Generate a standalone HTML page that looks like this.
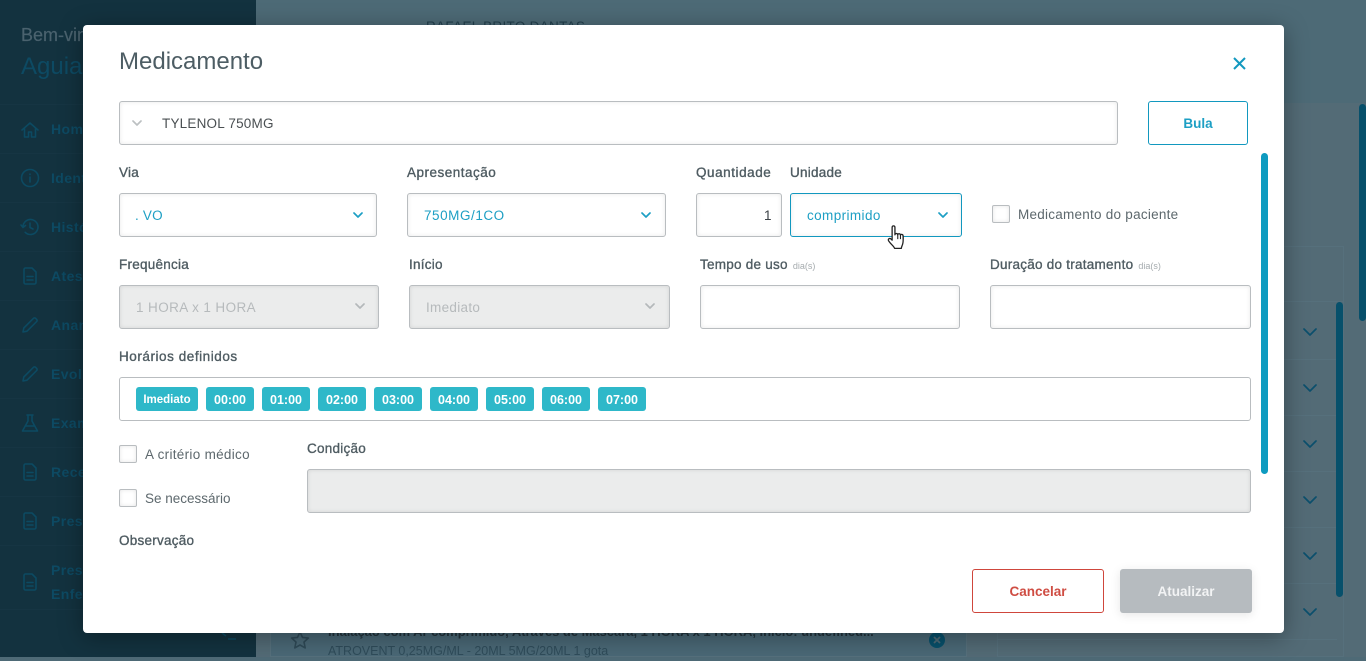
<!DOCTYPE html>
<html lang="pt-BR">
<head>
<meta charset="utf-8">
<title>Medicamento</title>
<style>
html,body{margin:0;padding:0;width:1366px;height:657px;overflow:hidden;background:#4e6a76;font-family:"Liberation Sans",sans-serif}
*{box-sizing:border-box}
.a{position:absolute}
.t{position:absolute;white-space:nowrap;line-height:20px;height:20px}
#side{left:0;top:0;width:256px;height:657px;background:#13323f}
.sep{position:absolute;left:0;width:256px;height:1px;background:#163543}
.st{position:absolute;left:51px;white-space:nowrap;color:#0d4a63;font-size:14px;font-weight:bold;line-height:20px;letter-spacing:.4px;margin-top:1px}
.si{position:absolute;left:20px;width:20px;height:20px;fill:none;stroke:#0c4a62;stroke-width:1.6;stroke-linecap:round;stroke-linejoin:round}
#modal{left:83px;top:25px;width:1201px;height:608px;background:#fff;border-radius:4px;box-shadow:0 4px 24px rgba(0,0,0,.35);position:absolute}
.lb{position:absolute;white-space:nowrap;font-size:13.5px;line-height:20px;color:#4f5c62;letter-spacing:.25px;-webkit-text-stroke:.35px #4f5c62;margin-top:1px}
.lb small{font-size:9px;color:#a5abae;-webkit-text-stroke:0;letter-spacing:0;margin-left:0}
.f{position:absolute;height:44px;background:#fff;border:1px solid #b9bdc0;border-radius:3px;box-shadow:inset 0 0 5px rgba(0,0,0,.09)}
.dis{background:#ebecec;box-shadow:inset 0 0 4px rgba(0,0,0,.1)}
.v{position:absolute;white-space:nowrap;font-size:13.5px;line-height:20px;letter-spacing:.2px;margin-top:1px}
.blue{color:#1d9fc4}
.chev{position:absolute;width:10px;height:6px;fill:none;stroke-width:1.7;stroke-linecap:round;stroke-linejoin:round}
.chip{position:absolute;top:387px;height:24px;width:48px;background:#2eb8c9;border-radius:3px;color:#fff;font-size:12.5px;font-weight:bold;text-align:center;line-height:24px;padding-top:1px}
.cb{position:absolute;width:18px;height:18px;background:#fff;border:1px solid #b9bdc0;border-radius:2px;box-shadow:inset 0 0 4px rgba(0,0,0,.1)}
.cl{position:absolute;white-space:nowrap;font-size:13.5px;line-height:20px;color:#5d686d;letter-spacing:.3px;margin-top:1px}
.line{position:absolute;background:#56707c;height:1px}
.dc{position:absolute;left:1303px;width:14px;height:9px;fill:none;stroke:#0b4f6c;stroke-width:1.7;stroke-linecap:round;stroke-linejoin:round}
</style>
</head>
<body>
<!-- page behind -->
<div class="a" style="left:256px;top:0;width:1110px;height:103px;background:#4d6a76"></div>
<div class="a" style="left:256px;top:103px;width:1110px;height:554px;background:#536b76"></div>
<div class="t" style="left:426px;top:17px;font-size:13.5px;color:#23404d;letter-spacing:.3px">RAFAEL BRITO DANTAS</div>
<div class="a" style="left:997px;top:246px;width:347px;height:411px;border:1px solid #56707c;background:#536b76"></div>
<div class="line" style="left:997px;top:301px;width:347px"></div>
<div class="line" style="left:997px;top:359px;width:340px"></div>
<div class="line" style="left:997px;top:415px;width:340px"></div>
<div class="line" style="left:997px;top:471px;width:340px"></div>
<div class="line" style="left:997px;top:527px;width:340px"></div>
<div class="line" style="left:997px;top:583px;width:340px"></div>
<div class="line" style="left:997px;top:639px;width:340px"></div>
<svg class="dc" style="top:328px" viewBox="0 0 14 9"><path d="M1 1l6 6 6-6"/></svg>
<svg class="dc" style="top:384px" viewBox="0 0 14 9"><path d="M1 1l6 6 6-6"/></svg>
<svg class="dc" style="top:440px" viewBox="0 0 14 9"><path d="M1 1l6 6 6-6"/></svg>
<svg class="dc" style="top:496px" viewBox="0 0 14 9"><path d="M1 1l6 6 6-6"/></svg>
<svg class="dc" style="top:552px" viewBox="0 0 14 9"><path d="M1 1l6 6 6-6"/></svg>
<svg class="dc" style="top:608px" viewBox="0 0 14 9"><path d="M1 1l6 6 6-6"/></svg>
<div class="a" style="left:1336px;top:302px;width:7px;height:295px;background:#07506b;border-radius:4px"></div>
<div class="a" style="left:1359px;top:104px;width:7px;height:217px;background:#07506b;border-radius:4px"></div>
<div class="a" style="left:270px;top:625px;width:697px;height:32px;background:#4a6876;border:1px solid #56707c"></div>
<svg class="a" style="left:290px;top:630px;width:20px;height:20px;fill:none;stroke:#2f4a57;stroke-width:1.6;stroke-linejoin:round" viewBox="0 0 20 20"><path d="M10 2l2.5 5.4 5.8.7-4.3 4 1.2 5.8L10 15l-5.2 2.9L6 12.100l-4.300-4 5.800-.7z"/></svg>
<div class="t" style="left:328px;top:622px;font-size:13px;font-weight:bold;color:#22333c;letter-spacing:-.03px">Inalação com Ar comprimido, Através de Máscara, 1 HORA x 1 HORA, Início: undefined...</div>
<div class="t" style="left:328px;top:641px;font-size:12.5px;color:#2f4c5a">ATROVENT 0,25MG/ML - 20ML 5MG/20ML 1 gota</div>
<svg class="a" style="left:929px;top:632px;width:16px;height:16px" viewBox="0 0 16 16"><circle cx="8" cy="8" r="8" fill="#07506b"/><path d="M5 5l6 6M11 5l-6 6" stroke="#4e6a76" stroke-width="1.8"/></svg>

<!-- sidebar -->
<div id="side" class="a">
  <div class="t" style="left:21px;top:25px;font-size:18px;color:#4a626e;-webkit-text-stroke:.2px #4a626e">Bem-vindo</div>
  <div class="t" style="left:21px;top:55px;font-size:24px;line-height:24px;height:26px;color:#0d4a63">Aguia</div>
  <div class="sep" style="top:104px"></div><div class="sep" style="top:153px"></div><div class="sep" style="top:202px"></div><div class="sep" style="top:251px"></div><div class="sep" style="top:300px"></div><div class="sep" style="top:349px"></div><div class="sep" style="top:398px"></div><div class="sep" style="top:447px"></div><div class="sep" style="top:496px"></div><div class="sep" style="top:545px"></div><div class="sep" style="top:609px"></div>
  <svg class="si" style="top:120px" viewBox="0 0 20 20"><path d="M2 10l8-7 8 7M4.500 8.500V17h4v-5h3v5h4V8.500"/></svg>
  <div class="st" style="top:118px">Home</div>
  <svg class="si" style="top:168px" viewBox="0 0 20 20"><circle cx="10" cy="10" r="8.500"/><path d="M10 9v5M10 6v.5"/></svg>
  <div class="st" style="top:167px">Identificação</div>
  <svg class="si" style="top:217px" viewBox="0 0 20 20"><path d="M3 10a7.500 7.500 0 1 1 2.200 5.300M1 8l2 2.500L5.500 8.500M10 6v4.500l3 1.500"/></svg>
  <div class="st" style="top:216px">Histórico</div>
  <svg class="si" style="top:266px" viewBox="0 0 20 20"><path d="M4 3.500a1.500 1.500 0 0 1 1.500-1.500H12l4 4v10.500a1.500 1.500 0 0 1-1.500 1.500h-9A1.500 1.500 0 0 1 4 16.500zM7 10.500h6M7 14h6"/></svg>
  <div class="st" style="top:265px">Atestado</div>
  <svg class="si" style="top:315px" viewBox="0 0 20 20"><path d="M3 17l.8-4L13.500 3.300a1.500 1.500 0 0 1 2.100 0l1.100 1.100a1.500 1.500 0 0 1 0 2.100L7 16.200z"/></svg>
  <div class="st" style="top:314px">Anamnese</div>
  <svg class="si" style="top:364px" viewBox="0 0 20 20"><path d="M3 17l.8-4L13.500 3.300a1.500 1.500 0 0 1 2.100 0l1.100 1.100a1.500 1.500 0 0 1 0 2.100L7 16.200z"/></svg>
  <div class="st" style="top:363px">Evolução</div>
  <svg class="si" style="top:413px" viewBox="0 0 20 20"><path d="M7 2h6M8 2v6L2.500 18h15L12 8V2M6 13h8"/></svg>
  <div class="st" style="top:412px">Exames</div>
  <svg class="si" style="top:462px" viewBox="0 0 20 20"><path d="M4 3.500a1.500 1.500 0 0 1 1.500-1.500H12l4 4v10.500a1.500 1.500 0 0 1-1.500 1.500h-9A1.500 1.500 0 0 1 4 16.500zM7 10.500h6M7 14h6"/></svg>
  <div class="st" style="top:461px">Receita</div>
  <svg class="si" style="top:511px" viewBox="0 0 20 20"><path d="M4 3.500a1.500 1.500 0 0 1 1.500-1.500H12l4 4v10.500a1.500 1.500 0 0 1-1.500 1.500h-9A1.500 1.500 0 0 1 4 16.500zM7 10.500h6M7 14h6"/></svg>
  <div class="st" style="top:510px">Prescrição</div>
  <svg class="si" style="top:572px" viewBox="0 0 20 20"><path d="M4 3.500a1.500 1.500 0 0 1 1.500-1.500H12l4 4v10.500a1.500 1.500 0 0 1-1.500 1.500h-9A1.500 1.500 0 0 1 4 16.500zM7 10.500h6M7 14h6"/></svg>
  <div class="st" style="top:559px">Prescrição</div>
  <div class="st" style="top:583px">Enfermagem</div>
  <svg class="a" style="left:220px;top:633px;width:18px;height:8px;fill:none;stroke:#0c4a62;stroke-width:1.6" viewBox="0 0 18 8"><path d="M2 0l4 3M8 6h8"/></svg>
</div>

<!-- modal -->
<div id="modal"></div>
<div class="t" style="left:119px;top:47px;height:30px;line-height:30px;font-size:24px;color:#4d5d64">Medicamento</div>
<svg class="a" style="left:1232px;top:56px;width:15px;height:15px;fill:none;stroke:#1298bf;stroke-width:2" viewBox="0 0 15 15"><path d="M2 2l11 11M13 2L2 13"/></svg>

<div class="f" style="left:119px;top:101px;width:999px"></div>
<svg class="chev" style="left:132px;top:120px;stroke:#bcc0c2" viewBox="0 0 10 6"><path d="M1 1l4 4 4-4"/></svg>
<div class="v" style="left:162px;top:113px;color:#4a4f52">TYLENOL 750MG</div>
<div class="a" style="left:1148px;top:101px;width:100px;height:44px;border:1px solid #1298bf;border-radius:3px;background:#fff;color:#1d9fc4;font-size:13.5px;font-weight:bold;text-align:center;line-height:44px">Bula</div>

<div class="lb" style="left:119px;top:162px">Via</div>
<div class="lb" style="left:407px;top:162px;letter-spacing:.5px">Apresentação</div>
<div class="lb" style="left:696px;top:162px;letter-spacing:.55px">Quantidade</div>
<div class="lb" style="left:790px;top:162px">Unidade</div>

<div class="f" style="left:119px;top:193px;width:258px"></div>
<div class="v blue" style="left:135px;top:205px">. VO</div>
<svg class="chev" style="left:353px;top:212px;stroke:#1d9fc4" viewBox="0 0 10 6"><path d="M1 1l4 4 4-4"/></svg>
<div class="f" style="left:407px;top:193px;width:259px"></div>
<div class="v blue" style="left:424px;top:205px;letter-spacing:.55px">750MG/1CO</div>
<svg class="chev" style="left:641px;top:212px;stroke:#1d9fc4" viewBox="0 0 10 6"><path d="M1 1l4 4 4-4"/></svg>
<div class="f" style="left:696px;top:193px;width:86px"></div>
<div class="v" style="left:764px;top:205px;color:#3c4246">1</div>
<div class="f" style="left:790px;top:193px;width:172px;border-color:#1298bf"></div>
<div class="v blue" style="left:807px;top:205px;letter-spacing:.4px">comprimido</div>
<svg class="chev" style="left:938px;top:212px;stroke:#1d9fc4" viewBox="0 0 10 6"><path d="M1 1l4 4 4-4"/></svg>
<div class="cb" style="left:992px;top:205px"></div>
<div class="cl" style="left:1018px;top:204px;letter-spacing:.25px">Medicamento do paciente</div>

<div class="lb" style="left:119px;top:254px">Frequência</div>
<div class="lb" style="left:409px;top:254px">Início</div>
<div class="lb" style="left:700px;top:254px">Tempo de uso <small style="margin-left:1px">dia(s)</small></div>
<div class="lb" style="left:990px;top:254px">Duração do tratamento <small style="margin-left:1px">dia(s)</small></div>

<div class="f dis" style="left:119px;top:285px;width:260px"></div>
<div class="v" style="left:136px;top:297px;color:#b6babc;letter-spacing:.4px">1 HORA x 1 HORA</div>
<svg class="chev" style="left:355px;top:303px;stroke:#b4b8ba" viewBox="0 0 10 6"><path d="M1 1l4 4 4-4"/></svg>
<div class="f dis" style="left:409px;top:285px;width:261px"></div>
<div class="v" style="left:426px;top:297px;color:#b6babc;letter-spacing:.3px">Imediato</div>
<svg class="chev" style="left:645px;top:303px;stroke:#b4b8ba" viewBox="0 0 10 6"><path d="M1 1l4 4 4-4"/></svg>
<div class="f" style="left:700px;top:285px;width:260px"></div>
<div class="f" style="left:990px;top:285px;width:261px"></div>

<div class="lb" style="left:119px;top:346px;letter-spacing:.55px">Horários definidos</div>
<div class="a" style="left:119px;top:377px;width:1132px;height:44px;border:1px solid #b9bdc0;border-radius:3px;background:#fff"></div>
<div class="chip" style="left:136px;width:62px;font-size:11.5px;letter-spacing:0">Imediato</div>
<div class="chip" style="left:206px">00:00</div>
<div class="chip" style="left:262px">01:00</div>
<div class="chip" style="left:318px">02:00</div>
<div class="chip" style="left:374px">03:00</div>
<div class="chip" style="left:430px">04:00</div>
<div class="chip" style="left:486px">05:00</div>
<div class="chip" style="left:542px">06:00</div>
<div class="chip" style="left:598px">07:00</div>

<div class="cb" style="left:119px;top:445px"></div>
<div class="cl" style="left:145px;top:444px">A critério médico</div>
<div class="cb" style="left:119px;top:489px"></div>
<div class="cl" style="left:145px;top:488px;letter-spacing:0">Se necessário</div>
<div class="lb" style="left:307px;top:438px">Condição</div>
<div class="f dis" style="left:307px;top:469px;width:944px"></div>
<div class="lb" style="left:119px;top:530px">Observação</div>

<div class="a" style="left:972px;top:569px;width:132px;height:44px;border:1px solid #cf463c;border-radius:3px;background:#fff;color:#cf4d43;font-size:13.5px;font-weight:bold;text-align:center;line-height:44px">Cancelar</div>
<div class="a" style="left:1120px;top:569px;width:132px;height:44px;border-radius:3px;background:#b6bbbf;color:#f2f3f4;font-size:13.5px;font-weight:bold;text-align:center;line-height:46px;box-shadow:0 2px 10px rgba(0,0,0,.1)">Atualizar</div>
<div class="a" style="left:1261px;top:153px;width:7px;height:321px;background:#0e9bc0;border-radius:4px"></div>

<!-- cursor -->
<svg class="a" style="left:885px;top:224px;width:24px;height:26px" viewBox="0 0 22 24"><path d="M6.500 3.200c0-2 2.600-2 2.600 0V10c.2-1.700 2.500-1.500 2.600 0 .2-1.400 2.400-1.300 2.500.3.300-1 2.300-1 2.400.6.200 3 .3 6-.6 8.300-.6 1.600-1 2.400-1 3.300H8.800c-.5-1.300-1.500-2.300-2.700-3.500-1.300-1.400-2.600-2.900-3-3.800-.5-1.400 1.100-2.500 2.300-1.400l1.100 1.100z" fill="#fff" stroke="#222" stroke-width="1.200" stroke-linejoin="round"/><path d="M11.700 10v4M14.200 10.300V14M16.600 11v3" stroke="#222" stroke-width="1" fill="none"/></svg>
</body>
</html>
